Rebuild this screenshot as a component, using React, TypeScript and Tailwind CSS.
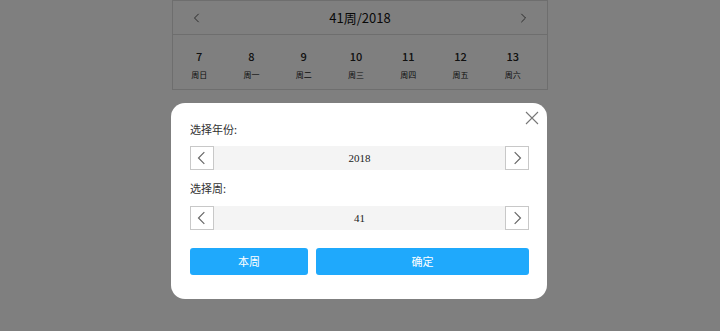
import React from "react";

const days = [
  { n: "7", w: "周日" },
  { n: "8", w: "周一" },
  { n: "9", w: "周二" },
  { n: "10", w: "周三" },
  { n: "11", w: "周四" },
  { n: "12", w: "周五" },
  { n: "13", w: "周六" },
];

const Chevron = ({ dir, size = 12, stroke = "#555", sw = 1 }: { dir: "l" | "r"; size?: number; stroke?: string; sw?: number }) => (
  <svg width={size} height={size} viewBox="0 0 12 12" fill="none">
    {dir === "l" ? (
      <path d="M8 1 L3 6 L8 11" stroke={stroke} strokeWidth={sw} />
    ) : (
      <path d="M4 1 L9 6 L4 11" stroke={stroke} strokeWidth={sw} />
    )}
  </svg>
);

const Stepper = ({ value }: { value: string }) => (
  <div className="flex h-[24px] items-stretch">
    <button className="flex w-[24px] items-center justify-center border border-[#c8c8c8] bg-white">
      <Chevron dir="l" size={14} stroke="#666" />
    </button>
    <div className="flex flex-1 items-center justify-center bg-[#f4f4f4] text-[11px] text-[#222]" style={{ fontFamily: '"Liberation Serif", serif' }}>
      {value}
    </div>
    <button className="flex w-[24px] items-center justify-center border border-[#c8c8c8] bg-white">
      <Chevron dir="r" size={14} stroke="#666" />
    </button>
  </div>
);

export default function App() {
  const font = { fontFamily: '"Noto Sans CJK SC", "Noto Sans", sans-serif' };
  return (
    <div className="min-h-[331px] w-full bg-white" style={font}>
      <div className="mx-auto w-[376px] border border-[#dcdcdc] bg-white">
        <div className="flex h-[34px] items-center justify-between border-b border-[#dcdcdc] px-[19px]">
          <Chevron dir="l" size={10} stroke="#333" />
          <div className="text-[13px] text-[#111]">41周/2018</div>
          <Chevron dir="r" size={10} stroke="#333" />
        </div>
        <div className="grid grid-cols-7 pb-[7px] pr-[8px] pt-[12px]">
          {days.map((d) => (
            <div key={d.n} className="flex flex-col items-center">
              <div className="text-[11px] font-medium leading-[18px] text-[#222]">{d.n}</div>
              <div className="mt-[3px] text-[8px] leading-[14px] text-[#222]">{d.w}</div>
            </div>
          ))}
        </div>
      </div>

      <div className="fixed inset-0 bg-black/50" />

      <div className="fixed inset-x-0 top-[103px] flex justify-center">
        <div className="relative -translate-x-[1px] w-[376px] rounded-[14px] bg-white pb-[24px] pl-[19px] pr-[18px] pt-[18px]">
          <button className="absolute right-[7px] top-[7px] flex h-[16px] w-[16px] items-center justify-center">
            <svg width="14" height="14" viewBox="0 0 14 14" fill="none">
              <path d="M1 1 L13 13 M13 1 L1 13" stroke="#777" strokeWidth="1.1" />
            </svg>
          </button>
          <div className="text-[11px] leading-[16px] text-[#333]">选择年份:</div>
          <div className="mt-[9px]">
            <Stepper value="2018" />
          </div>
          <div className="mt-[10px] text-[11px] leading-[16px] text-[#333]">选择周:</div>
          <div className="mt-[10px]">
            <Stepper value="41" />
          </div>
          <div className="mt-[18px] flex gap-[8px]">
            <button className="h-[27px] w-[118px] rounded-[3px] bg-[#1fa9fc] text-[11px] text-white">本周</button>
            <button className="h-[27px] flex-1 rounded-[3px] bg-[#1fa9fc] text-[11px] text-white">确定</button>
          </div>
        </div>
      </div>
    </div>
  );
}
